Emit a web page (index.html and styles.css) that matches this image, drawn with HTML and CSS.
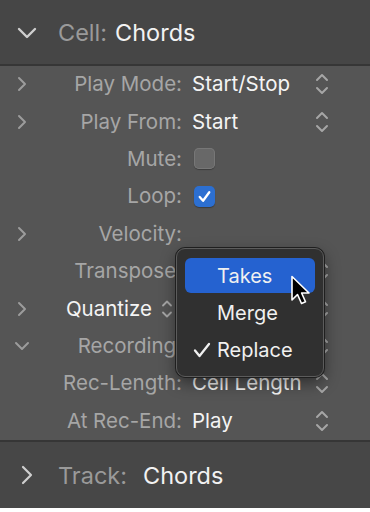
FILE: index.html
```html
<!DOCTYPE html>
<html>
<head>
<meta charset="utf-8">
<link rel="stylesheet" href="styles.css">
</head>
<body>
<div class="panel">
  <div class="hdr">
    <svg class="hchev" width="20" height="12" viewBox="0 0 20 12"><path d="M2 2 L10 10 L18 2" fill="none" stroke="#cfcfcf" stroke-width="2.4" stroke-linecap="round" stroke-linejoin="round"/></svg>
    <span class="hlab">Cell:</span><span class="hval">Chords</span>
  </div>
  <div class="sep"></div>
  <div class="body">
    <div class="row">
      <div class="chev"><svg width="10" height="16" viewBox="0 0 10 16"><path d="M2 2 L8 8 L2 14" fill="none" stroke="#9c9c9c" stroke-width="2" stroke-linecap="round" stroke-linejoin="round"/></svg></div>
      <div class="lab">Play Mode:</div>
      <div class="val">Start/Stop</div>
      <div class="step"><svg width="14" height="22" viewBox="0 0 14 22"><path d="M2 7 L7 2 L12 7 M2 15 L7 20 L12 15" fill="none" stroke="#a6a6a6" stroke-width="2" stroke-linecap="round" stroke-linejoin="round"/></svg></div>
    </div>
    <div class="row">
      <div class="chev"><svg width="10" height="16" viewBox="0 0 10 16"><path d="M2 2 L8 8 L2 14" fill="none" stroke="#9c9c9c" stroke-width="2" stroke-linecap="round" stroke-linejoin="round"/></svg></div>
      <div class="lab">Play From:</div>
      <div class="val">Start</div>
      <div class="step"><svg width="14" height="22" viewBox="0 0 14 22"><path d="M2 7 L7 2 L12 7 M2 15 L7 20 L12 15" fill="none" stroke="#a6a6a6" stroke-width="2" stroke-linecap="round" stroke-linejoin="round"/></svg></div>
    </div>
    <div class="row">
      <div class="chev"></div>
      <div class="lab">Mute:</div>
      <div class="val"><span class="cb"></span></div>
      <div class="step"></div>
    </div>
    <div class="row">
      <div class="chev"></div>
      <div class="lab">Loop:</div>
      <div class="val"><span class="cb on"><svg width="22" height="22" viewBox="0 0 22 22"><path d="M6 11.5 L9.5 15.5 L16 6.5" fill="none" stroke="#fff" stroke-width="2.4" stroke-linecap="round" stroke-linejoin="round"/></svg></span></div>
      <div class="step"></div>
    </div>
    <div class="row">
      <div class="chev"><svg width="10" height="16" viewBox="0 0 10 16"><path d="M2 2 L8 8 L2 14" fill="none" stroke="#9c9c9c" stroke-width="2" stroke-linecap="round" stroke-linejoin="round"/></svg></div>
      <div class="lab">Velocity:</div>
      <div class="val"></div>
      <div class="step"></div>
    </div>
    <div class="row">
      <div class="chev"></div>
      <div class="lab">Transpose:</div>
      <div class="val"></div>
      <div class="step"><svg width="14" height="22" viewBox="0 0 14 22"><path d="M2 7 L7 2 L12 7 M2 15 L7 20 L12 15" fill="none" stroke="#a6a6a6" stroke-width="2" stroke-linecap="round" stroke-linejoin="round"/></svg></div>
    </div>
    <div class="row">
      <div class="chev"><svg width="10" height="16" viewBox="0 0 10 16"><path d="M2 2 L8 8 L2 14" fill="none" stroke="#9c9c9c" stroke-width="2" stroke-linecap="round" stroke-linejoin="round"/></svg></div>
      <div class="lab lpop"><span class="white">Quantize</span><svg width="12" height="20" viewBox="0 0 12 20"><path d="M2 6.5 L6 2.5 L10 6.5 M2 13.5 L6 17.5 L10 13.5" fill="none" stroke="#a6a6a6" stroke-width="1.8" stroke-linecap="round" stroke-linejoin="round"/></svg></div>
      <div class="val"></div>
      <div class="step"><svg width="14" height="22" viewBox="0 0 14 22"><path d="M2 7 L7 2 L12 7 M2 15 L7 20 L12 15" fill="none" stroke="#a6a6a6" stroke-width="2" stroke-linecap="round" stroke-linejoin="round"/></svg></div>
    </div>
    <div class="row">
      <div class="chev"><svg width="16" height="10" viewBox="0 0 16 10"><path d="M2 2 L8 8 L14 2" fill="none" stroke="#9c9c9c" stroke-width="2" stroke-linecap="round" stroke-linejoin="round"/></svg></div>
      <div class="lab">Recording:</div>
      <div class="val"></div>
      <div class="step"><svg width="14" height="22" viewBox="0 0 14 22"><path d="M2 7 L7 2 L12 7 M2 15 L7 20 L12 15" fill="none" stroke="#a6a6a6" stroke-width="2" stroke-linecap="round" stroke-linejoin="round"/></svg></div>
    </div>
    <div class="row">
      <div class="chev"></div>
      <div class="lab">Rec-Length:</div>
      <div class="val">Cell Length</div>
      <div class="step"><svg width="14" height="22" viewBox="0 0 14 22"><path d="M2 7 L7 2 L12 7 M2 15 L7 20 L12 15" fill="none" stroke="#a6a6a6" stroke-width="2" stroke-linecap="round" stroke-linejoin="round"/></svg></div>
    </div>
    <div class="row">
      <div class="chev"></div>
      <div class="lab">At Rec-End:</div>
      <div class="val">Play</div>
      <div class="step"><svg width="14" height="22" viewBox="0 0 14 22"><path d="M2 7 L7 2 L12 7 M2 15 L7 20 L12 15" fill="none" stroke="#a6a6a6" stroke-width="2" stroke-linecap="round" stroke-linejoin="round"/></svg></div>
    </div>

    <div class="menu">
      <div class="item sel">Takes</div>
      <div class="item">Merge</div>
      <div class="item"><svg class="tick" width="18" height="16" viewBox="0 0 18 16"><path d="M2 8.5 L6.5 14 L16 2" fill="none" stroke="#f0f0f0" stroke-width="2.3" stroke-linecap="round" stroke-linejoin="round"/></svg>Replace</div>
    </div>
    <svg class="cursor" width="24" height="32" viewBox="0 0 24 32"><path d="M2 1.5 L2 25 L7.5 19.5 L11.5 28.5 L15.5 26.8 L11.6 18 L19 18 Z" fill="#000" stroke="#fff" stroke-width="1.6" stroke-linejoin="round"/></svg>
  </div>
  <div class="sep"></div>
  <div class="ftr">
    <svg class="fchev" width="12" height="20" viewBox="0 0 12 20"><path d="M2 2 L10 10 L2 18" fill="none" stroke="#cfcfcf" stroke-width="2.2" stroke-linecap="round" stroke-linejoin="round"/></svg>
    <span class="flab">Track:</span><span class="fval">Chords</span>
  </div>
</div>
</body>
</html>
```
FILE: styles.css
```css
html, body {
  margin: 0;
  padding: 0;
  background: #ffffff;
}
body {
  font-family: Inter, "Noto Sans", sans-serif;
  width: 370px;
  height: 512px;
  overflow: hidden;
}
.panel {
  width: 370px;
  height: 508px;
  display: flex;
  flex-direction: column;
}
.hdr {
  height: 64px;
  background: #464646;
  display: flex;
  align-items: center;
  font-size: 23.5px;
  padding-top: 1px;
  box-sizing: border-box;
}
.hchev {
  margin-left: 17px;
  margin-right: 21px;
}
.hlab {
  color: #9a9a9a;
  margin-right: 8px;
}
.hval {
  color: #f2f2f2;
}
.sep {
  height: 2px;
  background: #363636;
}
.body {
  position: relative;
  height: 374px;
  background: #555555;
  display: flex;
  flex-direction: column;
}
.row {
  height: 37.4px;
  display: grid;
  grid-template-columns: 44px 138px 1fr 14px;
  padding-right: 41px;
  align-items: center;
  font-size: 20.5px;
  line-height: 24px;
  padding-bottom: 1px;
  box-sizing: border-box;
}
.chev {
  display: flex;
  justify-content: center;
  align-items: center;
}
.lab {
  color: #a6a6a6;
  text-align: right;
  white-space: nowrap;
}
.lpop {
  display: flex;
  justify-content: flex-end;
  align-items: center;
  gap: 9px;
  padding-right: 9px;
}
.white {
  color: #f4f4f4;
}
.val {
  color: #f4f4f4;
  padding-left: 10px;
  display: flex;
  align-items: center;
  white-space: nowrap;
  min-height: 24px;
}
.step {
  display: flex;
  align-items: center;
  justify-content: center;
}
.cb {
  width: 21px;
  height: 21px;
  border-radius: 5px;
  background: #686868;
  box-shadow: inset 0 0 0 1px #777777, 0 1px 1px rgba(0,0,0,0.3);
  display: block;
  margin-left: 2px;
}
.cb.on {
  background: #2c6fd1;
  box-shadow: 0 1px 1px rgba(0,0,0,0.3);
}
.cb.on svg {
  display: block;
  width: 21px;
  height: 21px;
}
.menu {
  position: absolute;
  left: 176px;
  top: 182px;
  width: 148px;
  height: 129px;
  box-sizing: border-box;
  background: #303030;
  border: 1px solid #5c5c5c;
  border-radius: 9px;
  box-shadow: 0 0 0 1px #1f1f1f, 0 6px 16px rgba(0,0,0,0.45);
  padding: 9px 8px 0 8px;
  font-size: 20px;
}
.item {
  height: 35px;
  margin-bottom: 2px;
  border-radius: 6px;
  color: #f0f0f0;
  display: flex;
  align-items: center;
  padding-left: 32px;
  position: relative;
}
.item.sel {
  background: #2562d0;
}
.tick {
  position: absolute;
  left: 8px;
  top: 10px;
}
.cursor {
  position: absolute;
  left: 290px;
  top: 209px;
}
.ftr {
  flex: 1;
  background: #474747;
  display: flex;
  align-items: center;
  font-size: 23.5px;
}
.fchev {
  margin-left: 21px;
  margin-right: 25px;
}
.flab {
  color: #9a9a9a;
  margin-right: 16px;
}
.fval {
  color: #f2f2f2;
}
```
